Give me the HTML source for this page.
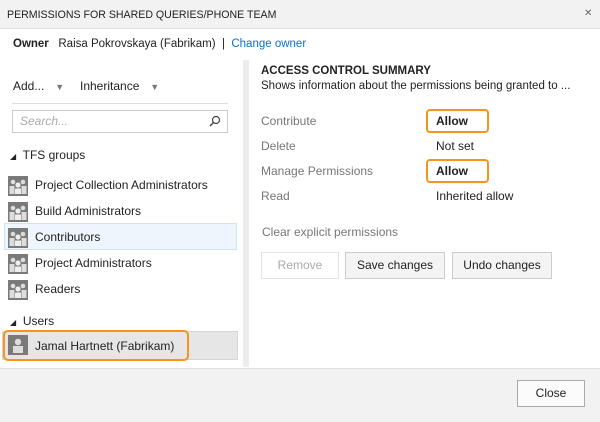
<!DOCTYPE html><html><head><style>
body{margin:0;width:600px;height:421px;overflow:hidden;font-family:"Segoe UI","Liberation Sans",sans-serif;font-size:12px;color:#222;background:#fff;position:relative}
div,span{position:absolute;white-space:nowrap}
.t{line-height:16px}
.g{color:#777}
.btn{border:1px solid #ccc;background:#f4f4f4;text-align:center;line-height:25px;box-sizing:border-box}
.ob{border:2px solid #f7931e;border-radius:4px;box-sizing:border-box}
</style></head><body>
<div style="left:0;top:0;width:600px;height:28px;background:#f2f2f2;border-bottom:1px solid #e0e0e0"></div>
<div class="t" style="left:7px;top:7px;font-size:10.6px">PERMISSIONS FOR SHARED QUERIES/PHONE TEAM</div>
<div class="t" style="left:584px;top:6px;color:#666;font-size:10px">✕</div>
<div class="t" style="left:13px;top:36px;font-size:11.5px"><b style="font-weight:600">Owner</b>&nbsp;&nbsp; Raisa Pokrovskaya (Fabrikam) &nbsp;|&nbsp; <span style="position:static;color:#0a72c6">Change owner</span></div>
<div class="t" style="left:13px;top:78px">Add... <span style="position:static;color:#777;font-size:9px">&nbsp;&nbsp;&nbsp;▼</span></div>
<div class="t" style="left:80px;top:78px">Inheritance <span style="position:static;color:#777;font-size:9px">&nbsp;&nbsp;&nbsp;▼</span></div>
<div style="left:12px;top:103px;width:216px;height:1px;background:#ddd"></div>
<div style="left:12px;top:110px;width:216px;height:23px;border:1px solid #ccc;box-sizing:border-box"></div>
<div class="t g" style="left:20px;top:113px;font-style:italic;color:#aaa">Search...</div>
<svg style="position:absolute;left:209px;top:115px" width="12" height="12"><circle cx="7" cy="5" r="3.5" fill="none" stroke="#444" stroke-width="1.2"/><line x1="4.5" y1="7.5" x2="1" y2="11" stroke="#444" stroke-width="1.4"/></svg>
<div class="t" style="left:10px;top:147px"><span style="position:static;font-size:8px">◢</span>&nbsp; TFS groups</div>
<div style="left:4px;top:223px;width:233px;height:27px;background:#eef5fd;border:1px solid #cfe2f7;box-sizing:border-box"></div>
<div style="left:2px;top:331px;width:236px;height:29px;background:#e6e6e6;border:1px solid #d6d6d6;box-sizing:border-box"></div>
<div class="ob" style="left:3px;top:330px;width:186px;height:31px;border-radius:5px"></div>
<div id="rows"></div>
<div class="t" style="left:10px;top:313px"><span style="position:static;font-size:8px">◢</span>&nbsp; Users</div>
<svg style="position:absolute;left:8px;top:335px" width="20" height="20"><rect width="20" height="20" fill="#7a7a7a"/><circle cx="10" cy="7" r="3.2" fill="#ddd"/><rect x="5" y="11" width="10" height="7" fill="#ddd"/></svg>
<div class="t" style="left:35px;top:338px">Jamal Hartnett (Fabrikam)</div>
<div style="left:243px;top:60px;width:6px;height:307px;background:#ececec"></div>
<div class="t" style="left:261px;top:63px;font-weight:600;font-size:11.5px">ACCESS CONTROL SUMMARY</div>
<div class="t" style="left:261px;top:78px;font-size:11.5px">Shows information about the permissions being granted to ...</div>
<div class="t g" style="left:261px;top:113px">Contribute</div>
<div class="t g" style="left:261px;top:138px">Delete</div>
<div class="t g" style="left:261px;top:163px">Manage Permissions</div>
<div class="t g" style="left:261px;top:188px">Read</div>
<div class="t" style="left:436px;top:113px;font-weight:bold">Allow</div>
<div class="t" style="left:436px;top:138px">Not set</div>
<div class="t" style="left:436px;top:163px;font-weight:bold">Allow</div>
<div class="t" style="left:436px;top:188px">Inherited allow</div>
<div class="ob" style="left:426px;top:109px;width:63px;height:24px"></div>
<div class="ob" style="left:426px;top:159px;width:63px;height:24px"></div>
<div class="t g" style="left:262px;top:224px">Clear explicit permissions</div>
<div class="btn" style="left:261px;top:252px;width:78px;height:27px;background:#fff;border-color:#e3e3e3;color:#aaa">Remove</div>
<div class="btn" style="left:345px;top:252px;width:100px;height:27px">Save changes</div>
<div class="btn" style="left:452px;top:252px;width:100px;height:27px">Undo changes</div>
<div style="left:0;top:368px;width:600px;height:53px;background:#f2f2f2;border-top:1px solid #e2e2e2"></div>
<div class="btn" style="left:517px;top:380px;width:68px;height:27px;background:#fbfbfb;border-color:#aaa">Close</div>
<script>
var n=["Project Collection Administrators","Build Administrators","Contributors","Project Administrators","Readers"],h="";
n.forEach(function(s,i){var y=176+i*26;h+='<svg style="position:absolute;left:8px;top:'+y+'px" width="20" height="20"><rect width="20" height="20" fill="#7a7a7a"/><circle cx="5" cy="6" r="2.3" fill="#ddd"/><circle cx="15" cy="6" r="2.3" fill="#ddd"/><circle cx="10" cy="9" r="2.6" fill="#eee"/><rect x="1.5" y="10" width="5" height="8" fill="#ddd"/><rect x="13.5" y="10" width="5" height="8" fill="#ddd"/><rect x="7" y="12.5" width="6" height="5.5" fill="#eee"/></svg><div class="t" style="left:35px;top:'+(y+1)+'px">'+s+'</div>';});
document.getElementById("rows").outerHTML=h;
</script>
</body></html>
